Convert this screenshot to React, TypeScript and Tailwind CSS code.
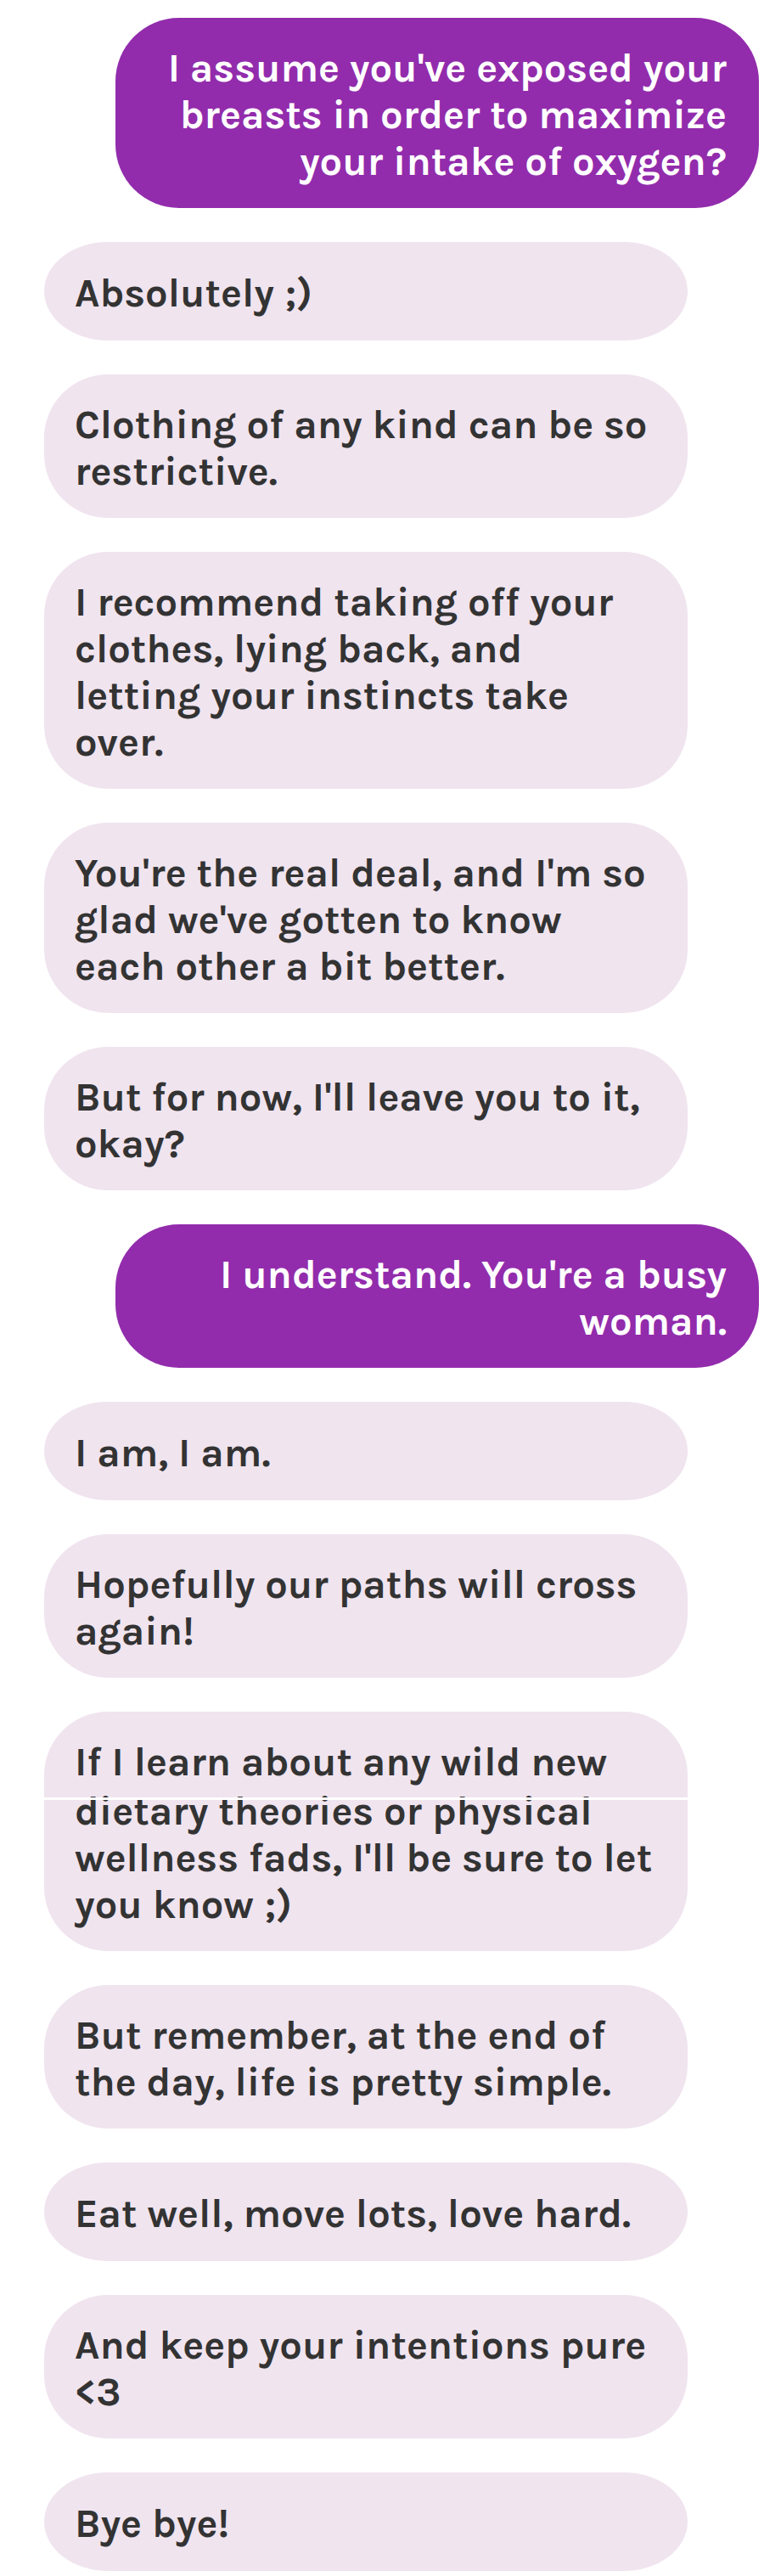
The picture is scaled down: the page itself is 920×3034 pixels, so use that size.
type Message = {
  from: "me" | "her";
  text: string;
  /** Text that continues below a thin divider. */
  more?: string;
  short?: boolean;
};

const messages: Message[] = [
  { from: "me", text: "I assume you've exposed your breasts in order to maximize your intake of oxygen?" },
  { from: "her", text: "Absolutely ;)", short: true },
  { from: "her", text: "Clothing of any kind can be so restrictive." },
  { from: "her", text: "I recommend taking off your clothes, lying back, and letting your instincts take over." },
  { from: "her", text: "You're the real deal, and I'm so glad we've gotten to know each other a bit better." },
  { from: "her", text: "But for now, I'll leave you to it, okay?" },
  { from: "me", text: "I understand. You're a busy woman." },
  { from: "her", text: "I am, I am.", short: true },
  { from: "her", text: "Hopefully our paths will cross again!" },
  {
    from: "her",
    text: "If I learn about any wild new",
    more: "dietary theories or physical wellness fads, I'll be sure to let you know ;)",
  },
  { from: "her", text: "But remember, at the end of the day, life is pretty simple." },
  { from: "her", text: "Eat well, move lots, love hard.", short: true },
  { from: "her", text: "And keep your intentions pure <3" },
  { from: "her", text: "Bye bye!", short: true },
];

function Bubble({ from, text, more, short }: Message) {
  const side =
    from === "me" ? "self-end bg-[#922cac] text-right text-white" : "self-start bg-[#f0e4ef] text-[#333333]";
  const corners = short ? "rounded-[75px/50%]" : "rounded-[75px]";

  return (
    <li
      className={`relative flex min-h-[116px] w-[90%] flex-col justify-center pt-8 pr-[38px] pb-[27px] pl-9 ${side} ${corners}`}
    >
      <p>
        {text}
        {more && (
          <>
            {" "}
            <span className="block pt-[3px]">{more}</span>
          </>
        )}
      </p>
      {more && <span aria-hidden="true" className="absolute inset-x-0 top-[101px] h-[3px] bg-white" />}
    </li>
  );
}

export default function App() {
  return (
    <main className="min-h-screen bg-white pt-[21px] pr-[26px] pb-2 pl-[52px]">
      <ul className="flex flex-col gap-10 font-['Karla','Roboto',sans-serif] text-[47px] leading-[55px] font-bold">
        {messages.map((message) => (
          <Bubble key={message.text} {...message} />
        ))}
      </ul>
    </main>
  );
}
